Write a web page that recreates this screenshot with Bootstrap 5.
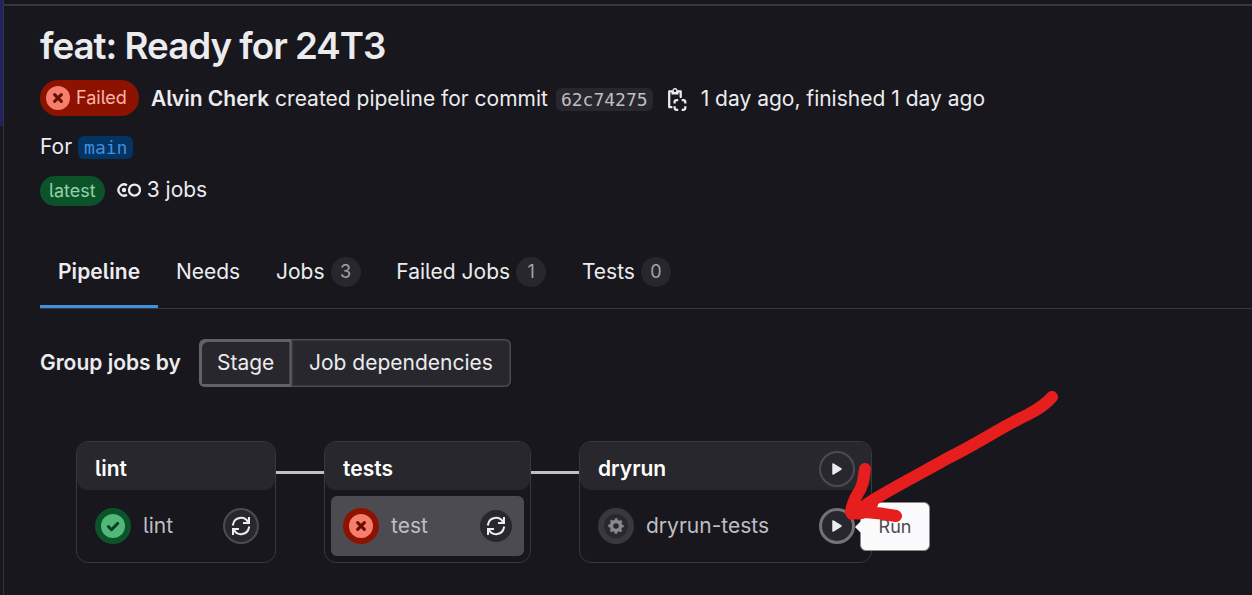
<!DOCTYPE html>
<html lang="en">
<head>
<meta charset="utf-8">
<title>feat: Ready for 24T3</title>
<link href="https://cdn.jsdelivr.net/npm/bootstrap@5.3.0/dist/css/bootstrap.min.css" rel="stylesheet">
<script src="https://cdn.jsdelivr.net/npm/bootstrap@5.3.0/dist/js/bootstrap.bundle.min.js"></script>
<style>
body{background:#18171d;color:#ececef;font-family:Inter,"Noto Sans",sans-serif;font-size:21px;line-height:30px;font-feature-settings:"cv05";overflow:hidden}
svg{display:block;flex:none}
.shell{height:595px}
.rail{width:4px;flex:none;border-right:1px solid #333238}
.rail-fill{height:126px;background:#232160}
.topline{height:6px;border-bottom:2px solid #37363c}
.main-col{padding-left:36px;min-width:0}
.page-title{font-size:36.75px;line-height:44px;font-weight:600;margin:18px 0 12px;letter-spacing:-1px}
.b6{font-weight:600}
.status{height:36px;border-radius:18px;background:#8d1300;color:#fcb5aa;font-size:18px;padding:0 12px 0 6px;gap:6px}
.meta{height:36px}
.meta .line{padding-top:2px}
.mono{font-family:"DejaVu Sans Mono",monospace;font-size:18px;line-height:23px;height:23px;border-radius:6px;padding:0 5px}
.sha{background:#28272d;color:#bfbfc3;margin-top:2px}
.branch{background:#033464;color:#428fdc;padding:0 6px}
.for-row{height:30px;margin-top:16px}
.tags-row{height:30px;margin-top:14px}
.tags-row .line{padding-bottom:2px}
.latest{height:30px;border-radius:15px;background:#0d532a;color:#91d4a8;font-size:18px;padding:0 9px}
.tabs-row{height:73px;margin-top:30px;border-bottom:1px solid #3a383f}
.tabs-row .nav-link{color:#ececef;padding:3px 17.8px 0 18px;height:72px;gap:6px;border-bottom:3px solid transparent}
.tabs-row .nav-link.active{border-color:#428fdc;font-weight:600;letter-spacing:.07px}
.count{width:30px;height:30px;border-radius:15px;background:#28272d;color:#a4a3a8;font-size:18px}
.group-row{margin-top:30px;height:48px}
.seg{height:48px;background:#28272d;box-shadow:inset 0 0 0 1.5px #4c4b51;padding:0 18px}
.seg-a{border-radius:6px 0 0 6px;box-shadow:inset 3px 3px 0 #626168,inset -1.5px -3px 0 #626168;width:92px}
.seg-b{border-radius:0 6px 6px 0;width:220px}
.graph{margin:54px 0 0 36px}
.stage{height:122px;border:1px solid #3a383f;border-radius:12px}
.stage-head{height:48px;background:#28272d;border-radius:11px;padding:6px 16px 0 18px;color:#fff}
.job{height:60px;margin:6px;border-radius:6px;padding:0 10px 0 12px;color:#bfbfc3;gap:12px}
.job-hi{background:#4c4b51}
.wire{width:48px;height:3px;margin-top:30px;background:#bfbfc3}
.act{width:36px;height:36px;border-radius:50%;border:2px solid #4c4b51;background:#28272d;color:#ececef}
.act-focus{border:3px solid #737278}
.tip{left:860px;top:502px;width:70px;height:49px;background:#fbfafd;border:1px solid #89888d;border-radius:6px;color:#4c4b51;font-size:18px}
.tip::before{content:"";position:absolute;left:-6px;top:18px;border:6px solid transparent;border-right-color:#fbfafd;border-left:0}
.ink{left:0;top:0;pointer-events:none}
</style>
</head>
<body>
<div class="shell d-flex position-relative">
  <div class="rail"><div class="rail-fill"></div></div>
  <div class="flex-grow-1 d-flex flex-column">
    <div class="topline"></div>
    <main class="main-col">
      <h1 class="page-title">feat: Ready for 24T3</h1>
      <div class="meta d-flex align-items-center text-nowrap">
        <span class="status d-flex align-items-center">
          <svg width="24" height="24" viewBox="0 0 24 24"><circle cx="12" cy="12" r="12" fill="#f57f6c"/><path d="M8.600 8.600l6.800 6.800M15.400 8.600l-6.800 6.800" stroke="#660e00" stroke-width="3" stroke-linecap="round"/></svg>
          <span>Failed</span></span>
        <span class="line" style="margin-left:12px"><span class="b6">Alvin Cherk</span> created pipeline for commit</span>
        <span class="mono sha ms-2">62c74275</span>
        <svg style="margin-left:14px;margin-top:2px" width="20" height="24" viewBox="0 0 20 24" fill="none" stroke="#ececef" stroke-width="2.250"><path d="M4.500 20.200H2.200V4.300H4.500M11 4.300h2.700V10" stroke-linejoin="round" stroke-linecap="round"/><path d="M4.500 7.500V3.500h1a2.500 2.500 0 0 1 5 0h1v4z" fill="#ececef" stroke="none"/><circle cx="8" cy="3.700" r="1.300" fill="#18171d" stroke="none"/><path d="M7.600 16.600v-1.600a2 2 0 0 1 2-2h1.600M14.700 13h1.600a2 2 0 0 1 2 2v1.600M18.300 19.200v1.600a2 2 0 0 1-2 2h-1.600M11.200 22.800h-1.600a2 2 0 0 1-2-2v-1.600"/></svg>
        <span class="line" style="margin-left:14px">1 day ago, finished 1 day ago</span>
      </div>
      <div class="for-row d-flex align-items-center"><span>For</span><span class="mono branch" style="margin-left:6px">main</span></div>
      <div class="tags-row d-flex align-items-center">
        <span class="latest d-flex align-items-center">latest</span>
        <svg style="margin-left:12px;margin-bottom:2px" width="24" height="24" viewBox="0 0 24 24" fill="none" stroke="#ececef" stroke-width="2.250"><circle cx="17.500" cy="12" r="5.500"/><path d="M10 7.200A5.600 5.600 0 1 0 10 16.800"/><circle cx="7" cy="12" r="2.200" fill="#ececef" stroke="none"/></svg>
        <span class="line" style="margin-left:6px">3 jobs</span>
      </div>
      <ul class="nav tabs-row flex-nowrap text-nowrap">
        <li><a class="nav-link active d-flex align-items-center">Pipeline</a></li>
        <li><a class="nav-link d-flex align-items-center">Needs</a></li>
        <li><a class="nav-link d-flex align-items-center">Jobs <span class="count d-flex align-items-center justify-content-center">3</span></a></li>
        <li><a class="nav-link d-flex align-items-center">Failed Jobs <span class="count d-flex align-items-center justify-content-center">1</span></a></li>
        <li><a class="nav-link d-flex align-items-center">Tests <span class="count d-flex align-items-center justify-content-center">0</span></a></li>
      </ul>
      <div class="group-row d-flex align-items-center text-nowrap">
        <span class="b6" style="width:159px">Group jobs by</span>
        <div class="seg seg-a d-flex align-items-center">Stage</div>
        <div class="seg seg-b d-flex align-items-center">Job dependencies</div>
      </div>
      <div class="graph d-flex align-items-start">
        <section class="stage" style="width:200px">
          <div class="stage-head d-flex align-items-center b6">lint</div>
          <div class="job d-flex align-items-center">
            <svg width="36" height="36" viewBox="0 0 36 36"><circle cx="18" cy="18" r="18" fill="#0d532a"/><circle cx="18" cy="18" r="12" fill="#52b87a"/><path d="M13.300 18.500l3.200 3.200 6.200-6.300" fill="none" stroke="#0a4020" stroke-width="3" stroke-linecap="round" stroke-linejoin="round"/></svg>
            <span>lint</span>
            <span class="act ms-auto d-flex align-items-center justify-content-center"><svg width="20" height="20" viewBox="0 0 20 20" fill="none" stroke="currentColor" stroke-width="2" stroke-linecap="square"><path d="M2 8.500A8.100 8.100 0 0 1 17 6M18 2v5h-5M18 11.500A8.100 8.100 0 0 1 3 14M2 18v-5h5"/></svg></span>
          </div>
        </section>
        <div class="wire"></div>
        <section class="stage" style="width:207px">
          <div class="stage-head d-flex align-items-center b6">tests</div>
          <div class="job job-hi d-flex align-items-center">
            <svg width="36" height="36" viewBox="0 0 36 36"><circle cx="18" cy="18" r="18" fill="#8d1300"/><circle cx="18" cy="18" r="12" fill="#f57f6c"/><path d="M14.600 14.600l6.800 6.800M21.400 14.600l-6.800 6.800" stroke="#660e00" stroke-width="3" stroke-linecap="round"/></svg>
            <span>test</span>
            <span class="act ms-auto d-flex align-items-center justify-content-center"><svg width="20" height="20" viewBox="0 0 20 20" fill="none" stroke="currentColor" stroke-width="2" stroke-linecap="square"><path d="M2 8.500A8.100 8.100 0 0 1 17 6M18 2v5h-5M18 11.500A8.100 8.100 0 0 1 3 14M2 18v-5h5"/></svg></span>
          </div>
        </section>
        <div class="wire"></div>
        <section class="stage" style="width:293px">
          <div class="stage-head d-flex align-items-center b6">dryrun
            <span class="act ms-auto d-flex align-items-center justify-content-center"><svg width="12" height="14" viewBox="0 0 12 14"><path d="M2 2v10l8-5z" fill="currentColor" stroke="currentColor" stroke-width="1.500" stroke-linejoin="round"/></svg></span></div>
          <div class="job d-flex align-items-center">
            <svg width="36" height="36" viewBox="0 0 36 36"><circle cx="18" cy="18" r="18" fill="#3a383f"/><circle cx="18" cy="18" r="12" fill="#28272d"/><g fill="none" stroke="#89888d"><circle cx="18" cy="18" r="4.500" stroke-width="3.400"/><circle cx="18" cy="18" r="6.700" stroke-width="2" stroke-dasharray="2.900 2.362" stroke-dashoffset="1.450"/></g></svg>
            <span>dryrun-tests</span>
            <span class="act act-focus ms-auto d-flex align-items-center justify-content-center"><svg width="12" height="14" viewBox="0 0 12 14"><path d="M2 2v10l8-5z" fill="currentColor" stroke="currentColor" stroke-width="1.500" stroke-linejoin="round"/></svg></span>
          </div>
        </section>
      </div>
    </main>
  </div>
  <div class="tip position-absolute d-flex align-items-center justify-content-center">Run</div>
  <svg class="ink position-absolute" width="1252" height="595" viewBox="0 0 1252 595" fill="none" stroke="#e61e1e" stroke-width="12" stroke-linecap="round" stroke-linejoin="round"><path d="M1052 397C1046 404 1037 410 1027 415C1000 428 975 445 948 458C920 474 892 488 870 502Q862 508 852 514M865 469C863 483 862 488 857 495Q852 504 851 512Q858 515 865 512C880 513 886 514 896 516M856 511L872 504 868 512"/></svg>
</div>
</body>
</html>
